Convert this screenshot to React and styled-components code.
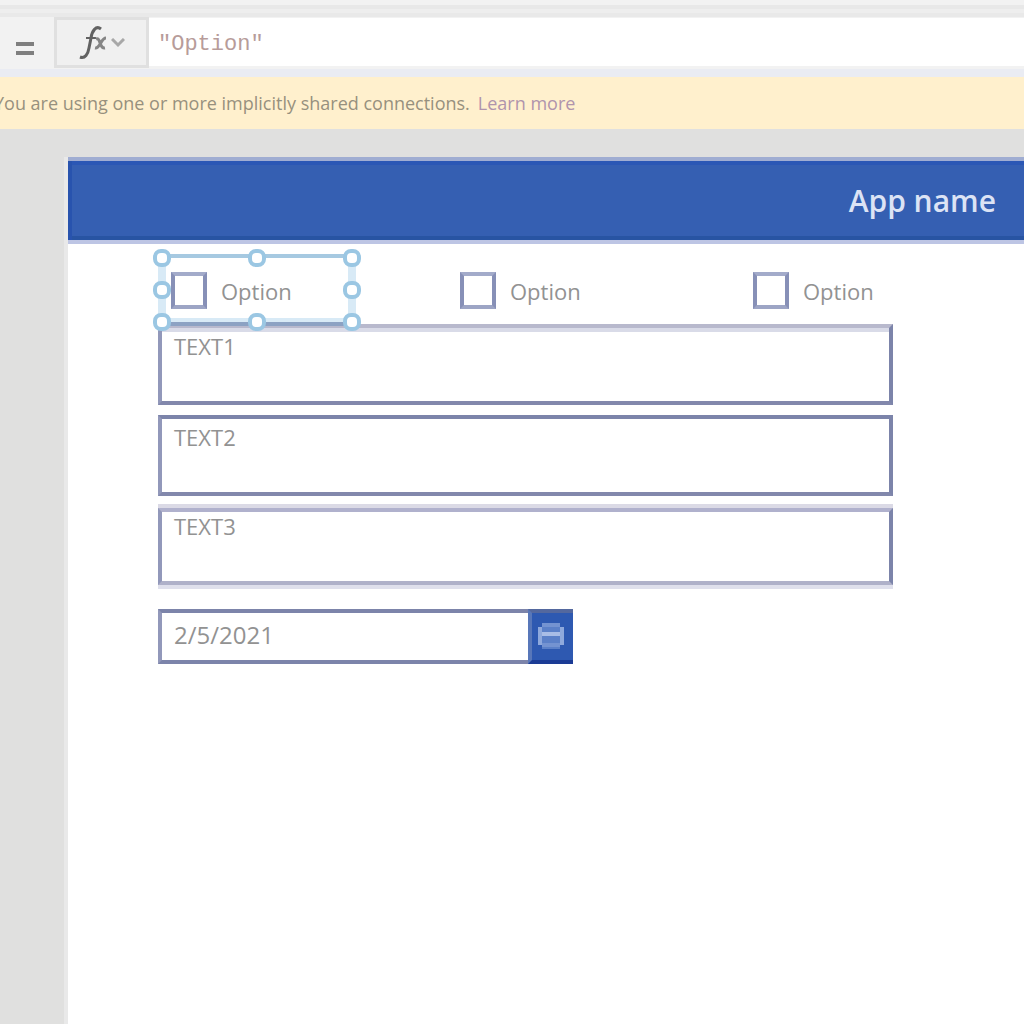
import React from "react";
import styled, { createGlobalStyle } from "styled-components";

const GlobalStyle = createGlobalStyle`
  *, *::before, *::after { box-sizing: border-box; }
  body {
    margin: 0;
    background: #e0e0df;
    color: #777777;
    font-family: "Open Sans", "Noto Sans", sans-serif;
    overflow-x: hidden;
  }
  button, input, textarea { font: inherit; color: inherit; margin: 0; border-radius: 0; }
`;

const Page = styled.div`
  min-height: 100vh;
  display: flex;
  flex-direction: column;
`;

const FormulaBar = styled.div`
  display: flex;
  align-items: stretch;
  height: 77px;
  padding: 13px 0 5px;
  background: linear-gradient(#f2f2f2 0 5px, #e8e8e8 5px 9px, #eeeeee 9px 13px, #e9e9e9 13px 17px, #f2f2f2 17px 69px, #eaecf3 69px);
`;

const EqualsLabel = styled.label`
  width: 54px;
  display: flex;
  align-items: center;
  justify-content: center;
  padding: 12px 4px 0 0;
  color: #7f7f7f;
`;

const FxButton = styled.button`
  width: 95px;
  margin: 4px 0;
  padding: 0 16px 0 16px;
  border: 3px solid #e0e0e0;
  background: #f0f0f0;
  display: flex;
  align-items: center;
  justify-content: center;
  gap: 4px;
  color: #626262;
`;

const FormulaInput = styled.input`
  flex: 1;
  min-width: 0;
  margin: 5px 0 6px;
  padding: 4px 8px 0 9px;
  border: 0;
  background: #ffffff;
  color: #b79c9a;
  font-family: "Liberation Mono", monospace;
  font-size: 22px;
`;

const Notice = styled.div`
  height: 52px;
  display: flex;
  align-items: center;
  gap: 8px;
  margin-left: -6px;
  background: #fff0cd;
  color: #97907e;
  font-size: 18px;
  white-space: nowrap;
`;

const NoticeLink = styled.a`
  color: #b094ac;
  text-decoration: none;
`;

const Screen = styled.main`
  flex: 1;
  margin: 28px 0 0 64px;
  border-left: 4px solid #e9e9e9;
  background: #ffffff;
`;

const AppHeader = styled.header`
  height: 87px;
  display: flex;
  align-items: center;
  justify-content: flex-end;
  padding: 0 28px 0 16px;
  background: #355fb2;
  border-top: 4px solid #a0add2;
  border-bottom: 4px solid #bdc5e4;
  box-shadow: inset 4px 0 #2853ae, inset 0 4px #2b57b5, inset 0 -4px #2854a3;
`;

const AppTitle = styled.h1`
  margin: 0;
  color: #dce3f5;
  font-size: 30px;
  line-height: 40px;
  font-weight: 600;
`;

const Form = styled.form`
  max-width: 825px;
  padding: 10px 0 0 90px;
`;

const Options = styled.div`
  display: grid;
  grid-template-columns: 289px 293px auto;
`;

const OptionCell = styled.div`
  position: relative;
  width: 198px;
  height: 70px;
  padding: 18px 13px 0;
`;

const OptionLabel = styled.label`
  display: flex;
  align-items: center;
  gap: 14px;
  height: 37px;
  color: #929292;
  font-size: 22px;
  line-height: 36px;
  white-space: nowrap;
`;

const CheckBox = styled.input`
  appearance: none;
  flex: none;
  width: 36px;
  height: 37px;
  background: #ffffff;
  border: 4px solid #8790b7;
  border-top-color: #a3abca;
  border-bottom-color: #9da5c5;
`;

const Selection = styled.div`
  position: absolute;
  inset: 0 0 -2px 0;
  pointer-events: none;
  z-index: 1;
  box-shadow: inset 0 4px #a6c9e1, inset 0 -4px #8ca2c3, inset 8px 0 #d8eaf6,
    inset -8px 0 #d8eaf6, inset 0 -8px #d8eaf6;
`;

const Handle = styled.span`
  position: absolute;
  left: ${(p) => p.$x};
  top: ${(p) => p.$y};
  width: 18px;
  height: 18px;
  transform: translate(-50%, -50%);
  border: 4px solid #9bc7e3;
  border-radius: 8px;
  background: #ffffff;
`;

const Fields = styled.div`
  display: flex;
  flex-direction: column;
  gap: 10px;
`;

const TextField = styled.textarea`
  display: block;
  width: 100%;
  height: ${(p) => (p.$soft ? "77px" : "81px")};
  margin-top: ${(p) => (p.$soft ? "2px" : "0")};
  padding: ${(p) => (p.$soft ? "0" : "4px")} 12px;
  resize: none;
  overflow: hidden;
  background: #ffffff;
  border: 4px solid #7c84aa;
  border-left-color: #9298ba;
  border-top-color: ${(p) => (p.$soft ? "#b0b1cd" : p.$pale ? "#b8b9cd" : "#7c84aa")};
  border-bottom-color: ${(p) => (p.$soft ? "#afb1c9" : "#8288ac")};
  box-shadow: ${(p) =>
    p.$soft ? "0 -4px #dbdae6, 0 4px #dfe0ec" : p.$pale ? "inset 0 4px #d9dbe8" : "none"};
  color: #929292;
  font-size: 22px;
  line-height: 28px;
`;

const DateField = styled.div`
  display: flex;
  width: 415px;
  max-width: 100%;
  height: 55px;
  margin-top: 24px;
`;

const DateInput = styled.input`
  flex: 1;
  min-width: 0;
  padding: 0 12px 4px;
  background: #ffffff;
  border: 4px solid #7c84aa;
  border-left-color: #9298ba;
  border-right: 0;
  color: #929292;
  font-size: 24px;
`;

const DateButton = styled.button`
  width: 45px;
  padding: 0 4px 2px 0;
  display: flex;
  align-items: center;
  justify-content: center;
  border: 0 solid #54689e;
  border-top: 4px solid #54689e;
  border-left: 4px solid #5877b9;
  border-bottom: 4px solid #1b3b95;
  background: #2e59b1;
`;

const handlePoints = [
  ["4px", "4px"],
  ["50%", "4px"],
  ["calc(100% - 4px)", "4px"],
  ["4px", "50%"],
  ["calc(100% - 4px)", "50%"],
  ["4px", "calc(100% - 4px)"],
  ["50%", "calc(100% - 4px)"],
  ["calc(100% - 4px)", "calc(100% - 4px)"],
];

function FxIcon() {
  return (
    <svg width="28" height="34" viewBox="0 0 28 34" fill="none" stroke="currentColor" aria-hidden="true">
      <path d="M22 3C17-1 13 5 12 12L10 22C9 28 6 33 1 31" strokeWidth="3" />
      <path d="M7 12h10" strokeWidth="2" />
      <path d="M17 13c5-2 3 10 9 9M27 12c-5 0-6 11-11 10" stroke="#858585" strokeWidth="3" />
    </svg>
  );
}

function ChevronIcon() {
  return (
    <svg width="14" height="10" viewBox="0 0 14 10" fill="none" stroke="#a8a8a8" strokeWidth="3" aria-hidden="true">
      <path d="M1 1l6 6 6-6" />
    </svg>
  );
}

function EqualsIcon() {
  return (
    <svg width="20" height="14" viewBox="0 0 20 14" fill="none" stroke="currentColor" strokeWidth="4" aria-hidden="true">
      <path d="M1 2h18M1 11h18" />
    </svg>
  );
}

function CalendarIcon() {
  return (
    <svg width="28" height="28" viewBox="0 0 28 28" fill="none" aria-hidden="true">
      <path d="M5 1h18v4h4v18h-4v4H5v-4H1V5h4z" fill="#5b80c8" />
      <path d="M3 5v18M25 5v18" stroke="#8fa9dc" strokeWidth="4" />
      <path d="M5 3h18M5 23h18" stroke="#7493d1" strokeWidth="4" />
      <path d="M5 12h18" stroke="#a9bde6" strokeWidth="4" />
    </svg>
  );
}

export default function App() {
  return (
    <Page>
      <GlobalStyle />
      <FormulaBar>
        <EqualsLabel htmlFor="formula" aria-label="Formula">
          <EqualsIcon />
        </EqualsLabel>
        <FxButton type="button" aria-label="Insert function">
          <FxIcon />
          <ChevronIcon />
        </FxButton>
        <FormulaInput id="formula" defaultValue={'"Option"'} spellCheck={false} />
      </FormulaBar>
      <Notice role="status">
        <span>You are using one or more implicitly shared connections.</span>
        <NoticeLink href="#learn-more">Learn more</NoticeLink>
      </Notice>
      <Screen>
        <AppHeader>
          <AppTitle>App name</AppTitle>
        </AppHeader>
        <Form>
          <Options>
            {["first", "second", "third"].map((name, index) => (
              <OptionCell key={name}>
                <OptionLabel htmlFor={name}>
                  <CheckBox type="checkbox" id={name} />
                  Option
                </OptionLabel>
                {index === 0 && (
                  <Selection>
                    {handlePoints.map(([x, y]) => (
                      <Handle key={x + y} $x={x} $y={y} />
                    ))}
                  </Selection>
                )}
              </OptionCell>
            ))}
          </Options>
          <Fields>
            <TextField aria-label="Text 1" defaultValue="TEXT1" $pale spellCheck={false} />
            <TextField aria-label="Text 2" defaultValue="TEXT2" spellCheck={false} />
            <TextField aria-label="Text 3" defaultValue="TEXT3" $soft spellCheck={false} />
          </Fields>
          <DateField>
            <DateInput aria-label="Date" defaultValue="2/5/2021" />
            <DateButton type="button" aria-label="Open calendar">
              <CalendarIcon />
            </DateButton>
          </DateField>
        </Form>
      </Screen>
    </Page>
  );
}
